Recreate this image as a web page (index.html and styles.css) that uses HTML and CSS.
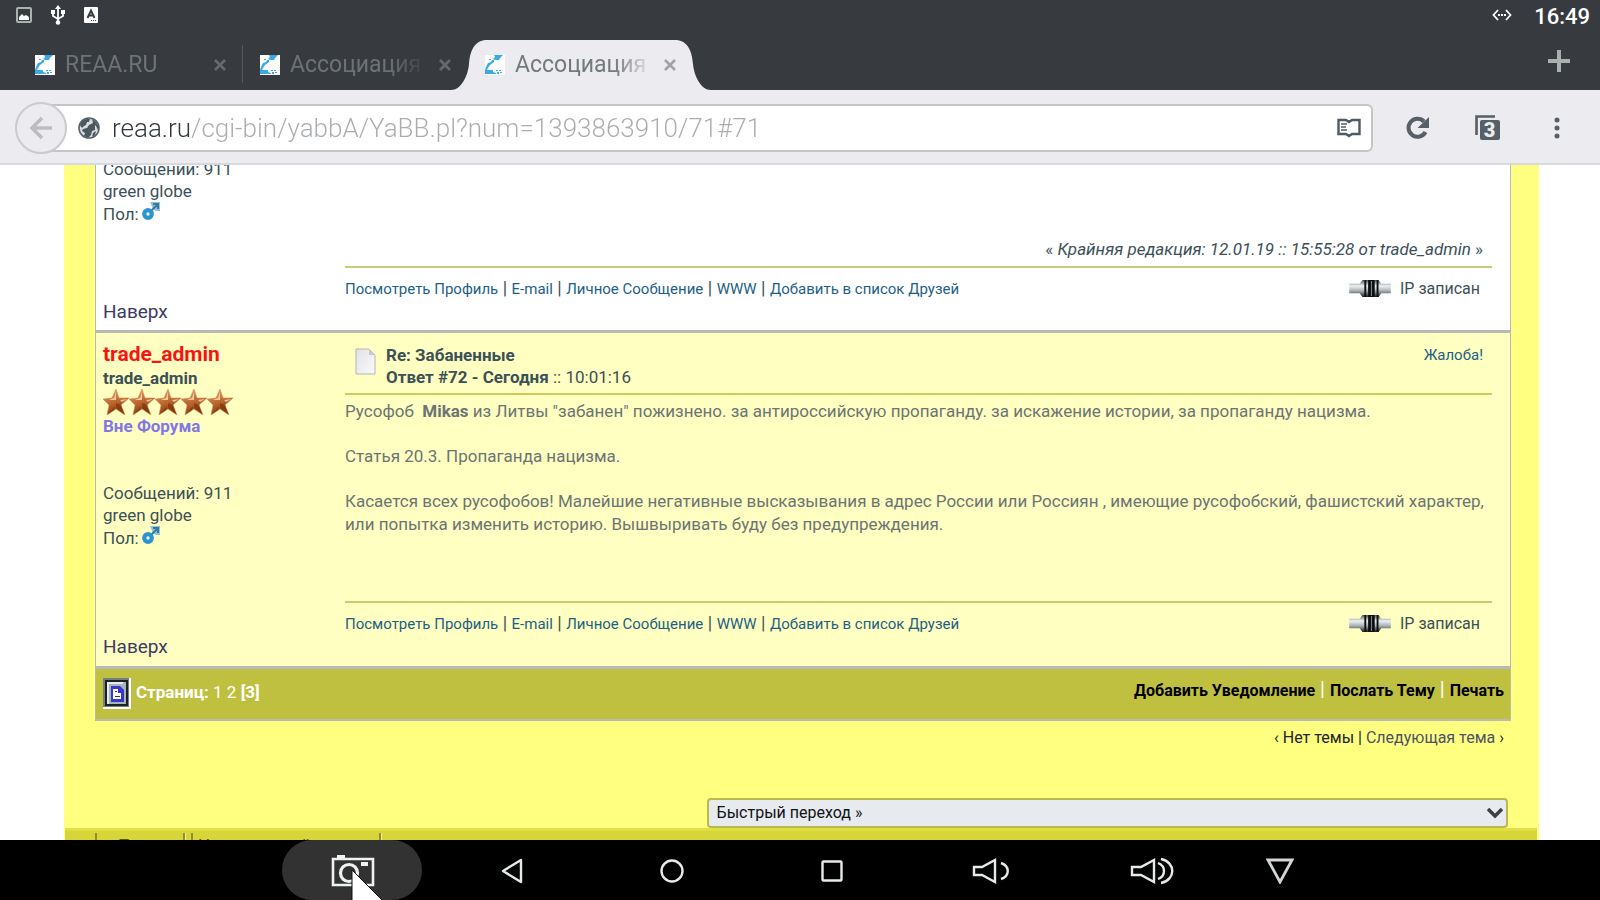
FILE: index.html
```
<!DOCTYPE html>
<html lang="ru">
<head>
<meta charset="utf-8">
<title>Ассоциация</title>
<link rel="stylesheet" href="styles.css">
</head>
<body>
<svg class="defs" aria-hidden="true">
  <defs>
    <linearGradient id="bronze" x1="0" y1="0" x2="0.3" y2="1"><stop offset="0" stop-color="#f0b089"/><stop offset="0.45" stop-color="#c8743a"/><stop offset="1" stop-color="#8e4010"/></linearGradient>
    <linearGradient id="steel" x1="0" y1="0" x2="0" y2="1"><stop offset="0" stop-color="#4c5458"/><stop offset="0.35" stop-color="#eef2f4"/><stop offset="0.65" stop-color="#a5acb0"/><stop offset="1" stop-color="#1c2022"/></linearGradient>
    <linearGradient id="paper" x1="0" y1="0" x2="1" y2="1"><stop offset="0" stop-color="#e2e2e8"/><stop offset="1" stop-color="#fafafc"/></linearGradient>
  </defs>
  <symbol id="favicon" viewBox="0 0 20 20"><path fill="#fff" d="M0 0h20v20H0z"/><path fill="#3aa9e4" d="M9 0h9l-3 3-1 2h-4L8 4l2-2zM7 5h2v2L5 10l-2 3-1 2h6v2l3 1v1H0v-4l1-3 2-4 3-1zM4 4h2v1H4zM11 15h2v1h-2zM14 15h2v1h-2zM12 17h2v2h-2zM15 17h2v1h-2z"/></symbol>
  <symbol id="close" viewBox="0 0 14 14"><path d="M2 2l10 10M12 2L2 12" fill="none" stroke="currentColor" stroke-width="2.6"/></symbol>
  <symbol id="star" viewBox="0 0 26 26"><path fill="url(#bronze)" stroke="#d88b58" stroke-width="0.6" d="M13 0l3 9 10 0-8 7 4 10-9-6-9 6 2-10-6-6 9-1z"/><path fill="#7d360b" opacity="0.7" d="M13 14l5 2 3 9-8-6zM5 25l7-8-1 4z"/><path fill="#ffe0b8" opacity="0.8" d="M13 3l0 8-7 0 5-2zM17 11l7-1-5 3z"/></symbol>
  <symbol id="male" viewBox="0 0 18 18"><path fill="#8cc4dc" d="M8 0h10v9h-4l-3-2z"/><path d="M9 9l6-6M11 2h5v5" fill="none" stroke="#39799c" stroke-width="2"/><circle cx="6" cy="12" r="3.800" fill="#e4f4fc" stroke="#2c93cf" stroke-width="4.200"/></symbol>
  <symbol id="cable" viewBox="0 0 44 18"><path fill="url(#steel)" d="M0 4h11l3-4h17l3 4h10v10H34l-3 4H14l-3-4H0z"/><path fill="#0d0f10" d="M16 0h2v18h-2zM20 0h7v18h-7zM29 0h2v18h-2z"/><path fill="#8d9699" d="M23 1h1v16h-1z"/></symbol>
</svg>

<header class="status">
  <div class="status-icons">
    <svg width="16" height="16" viewBox="0 0 16 16"><rect x="1" y="1" width="14" height="14" rx="1" fill="none" stroke="#a7b3ac" stroke-width="2"/><path fill="#fff" d="M3 13v-3l3-3 2 2 2-1 3 2v3z"/></svg>
    <svg width="14" height="20" viewBox="0 0 14 20"><path d="M7 3v14M2 6v5l5 3 5-3V6" fill="none" stroke="#fff" stroke-width="1.8"/><path fill="#fff" d="M7 0l3 4H4z"/><circle cx="7" cy="17.500" r="2.300" fill="#fff"/><path fill="#fff" d="M0 5h4v4H0zM10 5h4v4h-4z"/></svg>
    <svg width="14" height="16" viewBox="0 0 14 16"><rect width="14" height="16" rx="1" fill="#fff"/><path d="M3.500 11L7 3.500 10.500 11M5 8.500h4" fill="none" stroke="#373b3f" stroke-width="1.900"/><path fill="#373b3f" d="M7 13h1v1H7zM9 13h1v1H9zM11 13h1v1h-1z"/></svg>
  </div>
  <div class="status-right">
    <svg width="20" height="12" viewBox="0 0 20 12"><path d="M6 1L1.500 6 6 11M14 1l4.500 5L14 11" fill="none" stroke="#fff" stroke-width="1.800"/><path fill="#fff" d="M6 5h2v2H6zM9 5h2v2H9zM12 5h2v2h-2z"/></svg>
    <time>16:49</time>
  </div>
</header>

<nav class="tabs" aria-label="Вкладки">
  <div class="tab">
    <svg class="fav"><use href="#favicon"/></svg>
    <button class="tab-name">REAA.RU</button>
    <button class="tab-close" aria-label="Закрыть"><svg><use href="#close"/></svg></button>
  </div>
  <div class="tab tab-divided">
    <svg class="fav"><use href="#favicon"/></svg>
    <button class="tab-name">Ассоциация</button>
    <button class="tab-close" aria-label="Закрыть"><svg><use href="#close"/></svg></button>
  </div>
  <div class="tab tab-active">
    <svg class="tab-shape" viewBox="0 0 260 50"><path fill="#ebebf0" d="M0 50C10 50 17 36 18 24 19 10 24 0 36 0h188c12 0 17 10 18 24 1 12 8 26 18 26z"/></svg>
    <svg class="fav"><use href="#favicon"/></svg>
    <button class="tab-name">Ассоциация</button>
    <button class="tab-close" aria-label="Закрыть"><svg><use href="#close"/></svg></button>
  </div>
  <button class="new-tab" aria-label="Новая вкладка"><svg width="24" height="24" viewBox="0 0 24 24"><path d="M12 1v22M1 12h22" stroke="#a9b0b0" stroke-width="4"/></svg></button>
</nav>

<div class="toolbar">
  <button class="back" aria-label="Назад"><svg width="24" height="24" viewBox="0 0 24 24"><path d="M13 2L3 12l10 10M3 12h20" fill="none" stroke="#bdbdc1" stroke-width="3.600"/></svg></button>
  <div class="urlbar">
    <svg width="22" height="22" viewBox="0 0 22 22"><circle cx="11" cy="11" r="10" fill="#d9dde0" stroke="#56626a" stroke-width="1.600"/><path fill="#4a5860" d="M2 8l2-4 4-2 4 0-1 3-2 0-1 3-2 1-2 2zM5 12l4-1 2-3 4-2 2 2 0 5-3 1-1 4-3 3-4-2 1-3-3-2zM14 2l4 3 3 5-1 3-2-4-3-3zM15 16l3-2-1 4-3 2z"/></svg>
    <input class="url" type="text" aria-label="Адрес" value="reaa.ru/cgi-bin/yabbA/YaBB.pl?num=1393863910/71#71">
    <button class="plain" aria-label="Режим чтения"><svg width="24" height="20" viewBox="0 0 24 20"><path d="M1.500 2H9l3 2 3-2h7.500v14H15l-3 2-3-2H1.500z" fill="none" stroke="#4f5b61" stroke-width="2.400"/><path d="M4 6h6M4 9h5M4 12h6" stroke="#4f5b61" stroke-width="1.600"/></svg></button>
  </div>
  <div class="tools">
    <button aria-label="Обновить"><svg width="24" height="24" viewBox="0 0 24 24"><path d="M19 5.500A9 9 0 1 0 20.500 16" fill="none" stroke="#566066" stroke-width="4"/><path fill="#566066" d="M24 1v11H12.500z"/></svg></button>
    <button aria-label="Вкладки: 3"><span class="tab-count"><svg width="25" height="25" viewBox="0 0 25 25"><path d="M1.500 20V1.500H20" fill="none" stroke="#566066" stroke-width="2.600"/><rect x="5" y="5" width="20" height="20" rx="2" fill="#566066"/></svg><span>3</span></span></button>
    <button aria-label="Меню"><svg width="6" height="22" viewBox="0 0 6 22"><circle cx="3" cy="3" r="2.500" fill="#566066"/><circle cx="3" cy="11" r="2.500" fill="#566066"/><circle cx="3" cy="19" r="2.500" fill="#566066"/></svg></button>
  </div>
</div>

<main class="viewport">
  <div class="forum">
    <div class="thread">
      <article class="post post-plain">
        <div class="author">
          <p>Сообщений: 911<br>green globe<br>Пол: <svg class="male"><use href="#male"/></svg></p>
          <a class="top" href="#">Наверх</a>
        </div>
        <div class="body">
          <p class="edited">« <i>Крайняя редакция: 12.01.19 :: 15:55:28 от trade_admin</i> »</p>
          <footer class="actions">
            <div class="links"><a href="#">Посмотреть Профиль</a> | <a href="#">E-mail</a> | <a href="#">Личное Сообщение</a> | <a href="#">WWW</a> | <a href="#">Добавить в список Друзей</a></div>
            <span class="ip"><svg class="cable"><use href="#cable"/></svg>IP записан</span>
          </footer>
        </div>
      </article>
      <article class="post post-tint">
        <div class="author">
          <a class="nick" href="#">trade_admin</a>
          <b>trade_admin</b>
          <div class="stars"><svg><use href="#star"/></svg><svg><use href="#star"/></svg><svg><use href="#star"/></svg><svg><use href="#star"/></svg><svg><use href="#star"/></svg></div>
          <b class="offline">Вне Форума</b>
          <p class="info">Сообщений: 911<br>green globe<br>Пол: <svg class="male"><use href="#male"/></svg></p>
          <a class="top" href="#">Наверх</a>
        </div>
        <div class="body">
          <header class="post-head">
            <svg width="21" height="27" viewBox="0 0 21 27"><path fill="url(#paper)" stroke="#b4b4b8" d="M1 1h13l6 6v19H1z"/><path fill="#c9c9d0" d="M14 1l6 6h-6z"/></svg>
            <p><b>Re: Забаненные</b><br><b>Ответ #72 - Сегодня</b> :: 10:01:16</p>
            <a href="#">Жалоба!</a>
          </header>
          <div class="message">
            <p>Русофоб &nbsp;<b>Mikas</b> из Литвы "забанен" пожизнено. за антироссийскую пропаганду. за искажение истории, за пропаганду нацизма.</p>
            <p>Статья 20.3. Пропаганда нацизма.</p>
            <p>Касается всех русофобов! Малейшие негативные высказывания в адрес России или Россиян , имеющие русофобский, фашистский характер, или попытка изменить историю. Вышвыривать буду без предупреждения.</p>
          </div>
          <footer class="actions">
            <div class="links"><a href="#">Посмотреть Профиль</a> | <a href="#">E-mail</a> | <a href="#">Личное Сообщение</a> | <a href="#">WWW</a> | <a href="#">Добавить в список Друзей</a></div>
            <span class="ip"><svg class="cable"><use href="#cable"/></svg>IP записан</span>
          </footer>
        </div>
      </article>
      <div class="pages">
        <svg width="28" height="31" viewBox="0 0 28 31"><path fill="#fff" d="M0 0h28v31H0z"/><path fill="#777f80" d="M0 0h26v29H0z"/><path fill="#1c2222" d="M2 2h23v26H2z"/><path fill="#a8b4b8" d="M4 4h19v22H4z"/><path fill="#e4eaee" d="M4 4h16v2H6v20H4z"/><path fill="#3a36c8" d="M8 8h9l4 4v12H8z"/><path fill="#fff" d="M10 11h5v4h3v6h-8z"/><path fill="#30306a" d="M12 13h2v1h-2zM12 18h5v1h-5z"/></svg>
        <span><b>Страниц:</b> <a href="#">1</a> <a href="#">2</a> <b>[3]</b></span>
        <div class="page-links"><a href="#">Добавить Уведомление</a> | <a href="#">Послать Тему</a> | <a href="#">Печать</a></div>
      </div>
    </div>
    <p class="next">‹ Нет темы | <a href="#">Следующая тема</a> ›</p>
    <div class="jump">
      <select aria-label="Быстрый переход"><option>Быстрый переход »</option></select>
    </div>
    <div class="footer-menu"><a class="home" href="#">Поиск</a><a class="site" href="#">Независимый</a></div>
  </div>
</main>

<nav class="system" aria-label="Система">
  <button class="pressed" aria-label="Снимок экрана"><svg width="44" height="32" viewBox="0 0 44 32"><path d="M2 4h40v26H2z" fill="none" stroke="#eef2f2" stroke-width="2.600"/><path fill="#eef2f2" d="M6 0h8v4H6zM30 7h7v4h-7z"/><circle cx="18" cy="18" r="8.500" fill="none" stroke="#eef2f2" stroke-width="3.200"/></svg></button>
  <button aria-label="Назад"><svg width="22" height="26" viewBox="0 0 22 26"><path d="M20 2v22L2 13z" fill="none" stroke="#e6eaea" stroke-width="2.400" stroke-linejoin="round"/></svg></button>
  <button aria-label="Домой"><svg width="26" height="26" viewBox="0 0 26 26"><circle cx="13" cy="13" r="10.500" fill="none" stroke="#e6eaea" stroke-width="2.400"/></svg></button>
  <button aria-label="Обзор"><svg width="22" height="22" viewBox="0 0 22 22"><rect x="1.500" y="1.500" width="19" height="19" rx="1" fill="none" stroke="#e6eaea" stroke-width="2.400"/></svg></button>
  <button aria-label="Тише"><svg width="40" height="26" viewBox="0 0 40 26"><path d="M2 9h8l13-7v22l-13-7H2z" fill="none" stroke="#e6eaea" stroke-width="2.400"/><path d="M29 5c9 3 9 13 0 16" fill="none" stroke="#e6eaea" stroke-width="2.400"/></svg></button>
  <button aria-label="Громче"><svg width="44" height="28" viewBox="0 0 44 28"><path d="M2 10h9l13-7v22l-13-7H2z" fill="none" stroke="#e6eaea" stroke-width="2.400"/><path d="M28 6c8 3 8 13 0 16M31 2c15 3 15 21 0 24" fill="none" stroke="#e6eaea" stroke-width="2.400"/></svg></button>
  <button class="hide" aria-label="Скрыть"><svg width="28" height="26" viewBox="0 0 28 26"><path d="M2 2h24L14 24z" fill="none" stroke="#d2d6d6" stroke-width="2.800"/></svg></button>
  <svg class="cursor" viewBox="0 0 32 32"><path fill="#fff" stroke="#111" d="M1 1l31 31v6H1z"/></svg>
</nav>
</body>
</html>
```
FILE: styles.css
```
* { box-sizing: border-box; }
body {
  margin: 0;
  height: 100vh;
  display: flex;
  flex-direction: column;
  overflow: hidden;
  background: #fff;
  color: #3c5058;
  font: 17px/22px Roboto, "Noto Sans", sans-serif;
}
p { margin: 0; }
a { text-decoration: none; color: inherit; }
button { border: 0; padding: 0; background: none; color: inherit; font: inherit; }
svg { display: block; flex: none; }
.defs { position: absolute; width: 0; height: 0; }

.status {
  flex: none;
  height: 40px;
  padding: 0 10px 10px 16px;
  display: flex;
  justify-content: space-between;
  align-items: center;
  background: #373b3f;
  color: #fff;
}
.status-icons { display: flex; align-items: center; gap: 19px; }
.status-right { display: flex; align-items: center; gap: 22px; }
.status time { padding-top: 3px; font-size: 22px; font-weight: 500; }

.tabs {
  flex: none;
  height: 50px;
  padding: 0 29px 0 17px;
  display: flex;
  align-items: center;
  background: #373b3f;
}
.tab {
  position: relative;
  width: 225px;
  height: 50px;
  padding: 0 15px 0 18px;
  display: flex;
  align-items: center;
  gap: 10px;
  color: #6d7375;
}
.tab-divided::before {
  content: "";
  position: absolute;
  left: 0;
  top: 5px;
  height: 38px;
  width: 1px;
  background: #53585b;
}
.tab-active { color: #747a7a; }
.tab-shape { position: absolute; left: -16px; top: 0; width: 260px; height: 50px; }
.fav { position: relative; width: 20px; height: 20px; }
.tab-name {
  position: relative;
  flex: 1;
  text-align: left;
  font-size: 23px;
  line-height: 32px;
  white-space: nowrap;
  -webkit-mask-image: linear-gradient(to right, #000 72%, transparent 100%);
  mask-image: linear-gradient(to right, #000 72%, transparent 100%);
}
.tab-close { position: relative; color: #656b6d; }
.tab-close svg { width: 14px; height: 14px; }
.tab-active .tab-close { color: #a0a3a5; }
.new-tab { margin-left: auto; padding-bottom: 8px; }

.toolbar {
  flex: none;
  height: 75px;
  padding: 2px 8px 0 15px;
  display: flex;
  align-items: center;
  background: #ebebf0;
  border-bottom: 2px solid #d8d9de;
}
.back {
  position: relative;
  z-index: 1;
  flex: none;
  width: 52px;
  height: 52px;
  display: grid;
  place-items: center;
  border: 2px solid #cbcbce;
  border-radius: 50%;
  background: #ebebf0;
}
.urlbar {
  flex: 1;
  height: 48px;
  margin-left: -20px;
  padding: 0 10px 0 29px;
  display: flex;
  align-items: center;
  gap: 12px;
  border: 2px solid #c4c5c6;
  border-radius: 6px;
  background: #fff;
}
.url {
  flex: 1;
  min-width: 0;
  border: 0;
  padding: 0;
  outline: 0;
  font: 300 26px/36px Roboto, sans-serif;
  color: transparent;
  background: linear-gradient(to right, #30383c 78px, #a9adb0 78px);
  -webkit-background-clip: text;
  background-clip: text;
}
.tools { display: flex; margin-left: 9px; }
.tools button { width: 70px; display: grid; place-items: center; }
.tab-count { position: relative; }
.tab-count span {
  position: absolute;
  left: 5px;
  top: 4px;
  width: 20px;
  text-align: center;
  font-size: 20px;
  font-weight: 900;
  color: #ebebf0;
}

.viewport { flex: 1; min-height: 0; overflow: hidden; padding: 0 61px 0 64px; }
.forum { background: #ffff80; }
.thread { margin: 0 28px 0 31px; border: solid #b9b9ba; border-width: 0 1px 2px 1px; }
.post { display: grid; grid-template-columns: 249px 1fr; padding-right: 18px; border-bottom: 3px solid #b9b9ba; }
.post-plain { height: 168px; background: #fff; }
.post-tint { background: #ffffc1; }
.author { display: flex; flex-direction: column; padding: 8px 7px 7px; }
.post-plain .author { padding-top: 0; }
.post-plain .author p { margin-top: -7px; }
.author .nick { font-size: 21px; font-weight: 700; line-height: 26px; color: #f81414; }
.author .offline { color: #8276e8; }
.stars { display: flex; }
.stars svg { width: 26px; height: 26px; }
.male { display: inline-block; width: 18px; height: 18px; margin-left: -1px; vertical-align: 0; }
.info { padding-top: 45px; }
.top { margin-top: auto; color: #3b3a66; font-size: 19px; line-height: 24px; }
.body { display: flex; flex-direction: column; min-width: 0; }
.edited { margin-top: 73px; padding-right: 9px; text-align: right; }
.actions {
  display: flex;
  justify-content: space-between;
  margin-top: auto;
  padding: 9px 12px 31px 0;
  border-top: 2px solid #cccb75;
}
.post-plain .actions { margin-top: 6px; }
.links { font-size: 18px; white-space: pre-wrap; }
.links a, .post-head a { color: #1d5f86; font-size: 15px; }
.ip { display: flex; align-items: center; gap: 8px; font-size: 16px; }
.cable { width: 44px; height: 17px; }
.post-head {
  display: flex;
  gap: 10px;
  align-items: flex-start;
  padding: 11px 9px 5px 10px;
  border-bottom: 2px solid #cccb5b;
}
.post-head svg { margin-top: 4px; }
.post-head a { margin-left: auto; }
.message { padding: 5px 0 65px; color: #6d7474; line-height: 23px; }
.message p + p { padding-top: 22px; }
.pages {
  display: flex;
  gap: 5px;
  height: 50px;
  padding: 9px 6px 0 7px;
  background: #bfbf40;
  color: #fff;
}
.pages span { padding-top: 3px; }
.page-links { margin-left: auto; font-size: 20px; white-space: pre-wrap; }
.page-links a { font-size: 16px; font-weight: 700; color: #000; }
.next { padding: 6px 35px 0 0; text-align: right; font-size: 16px; color: #202428; }
.next a { color: #4c5268; }
.jump { display: flex; justify-content: flex-end; padding: 49px 31px 0 0; }
.jump select {
  width: 55.5%;
  height: 30px;
  padding: 0 8px;
  border: 2px solid #b9b94c;
  border-radius: 4px;
  appearance: none;
  font: 16px/24px Roboto, sans-serif;
  color: #101214;
  background: url("data:image/svg+xml,%3Csvg xmlns='http://www.w3.org/2000/svg' viewBox='0 0 18 12'%3E%3Cpath d='M2 2l7 7 7-7' fill='none' stroke='%233c4043' stroke-width='3.4'/%3E%3C/svg%3E") no-repeat right 2px center / 18px 12px #e7eaee;
}
.footer-menu {
  display: flex;
  gap: 6px;
  height: 40px;
  margin: 0 2px 0 1px;
  padding: 2px 30px 0;
  border-top: 3px solid #e0e044;
  background: #d6d63a;
}
.footer-menu a { border: 1px solid #8f8f30; border-width: 0 2px; box-shadow: 1px 0 #efefa0; }
.home { width: 90px; padding: 1px 21px; color: #55551c; }
.site { width: 190px; padding: 1px 5px; color: #a02c10; }

.system {
  position: relative;
  flex: none;
  height: 60px;
  display: flex;
  justify-content: center;
  background: #000;
}
.system button { width: 160px; padding-top: 1px; display: grid; place-items: center; }
.system .hide { width: 96px; }
.system .pressed { width: 140px; margin: 0 10px; padding-left: 2px; border-radius: 30px; background: #323232; }
.cursor { position: absolute; left: calc(50% - 449px); top: 29px; width: 32px; height: 32px; }
```
